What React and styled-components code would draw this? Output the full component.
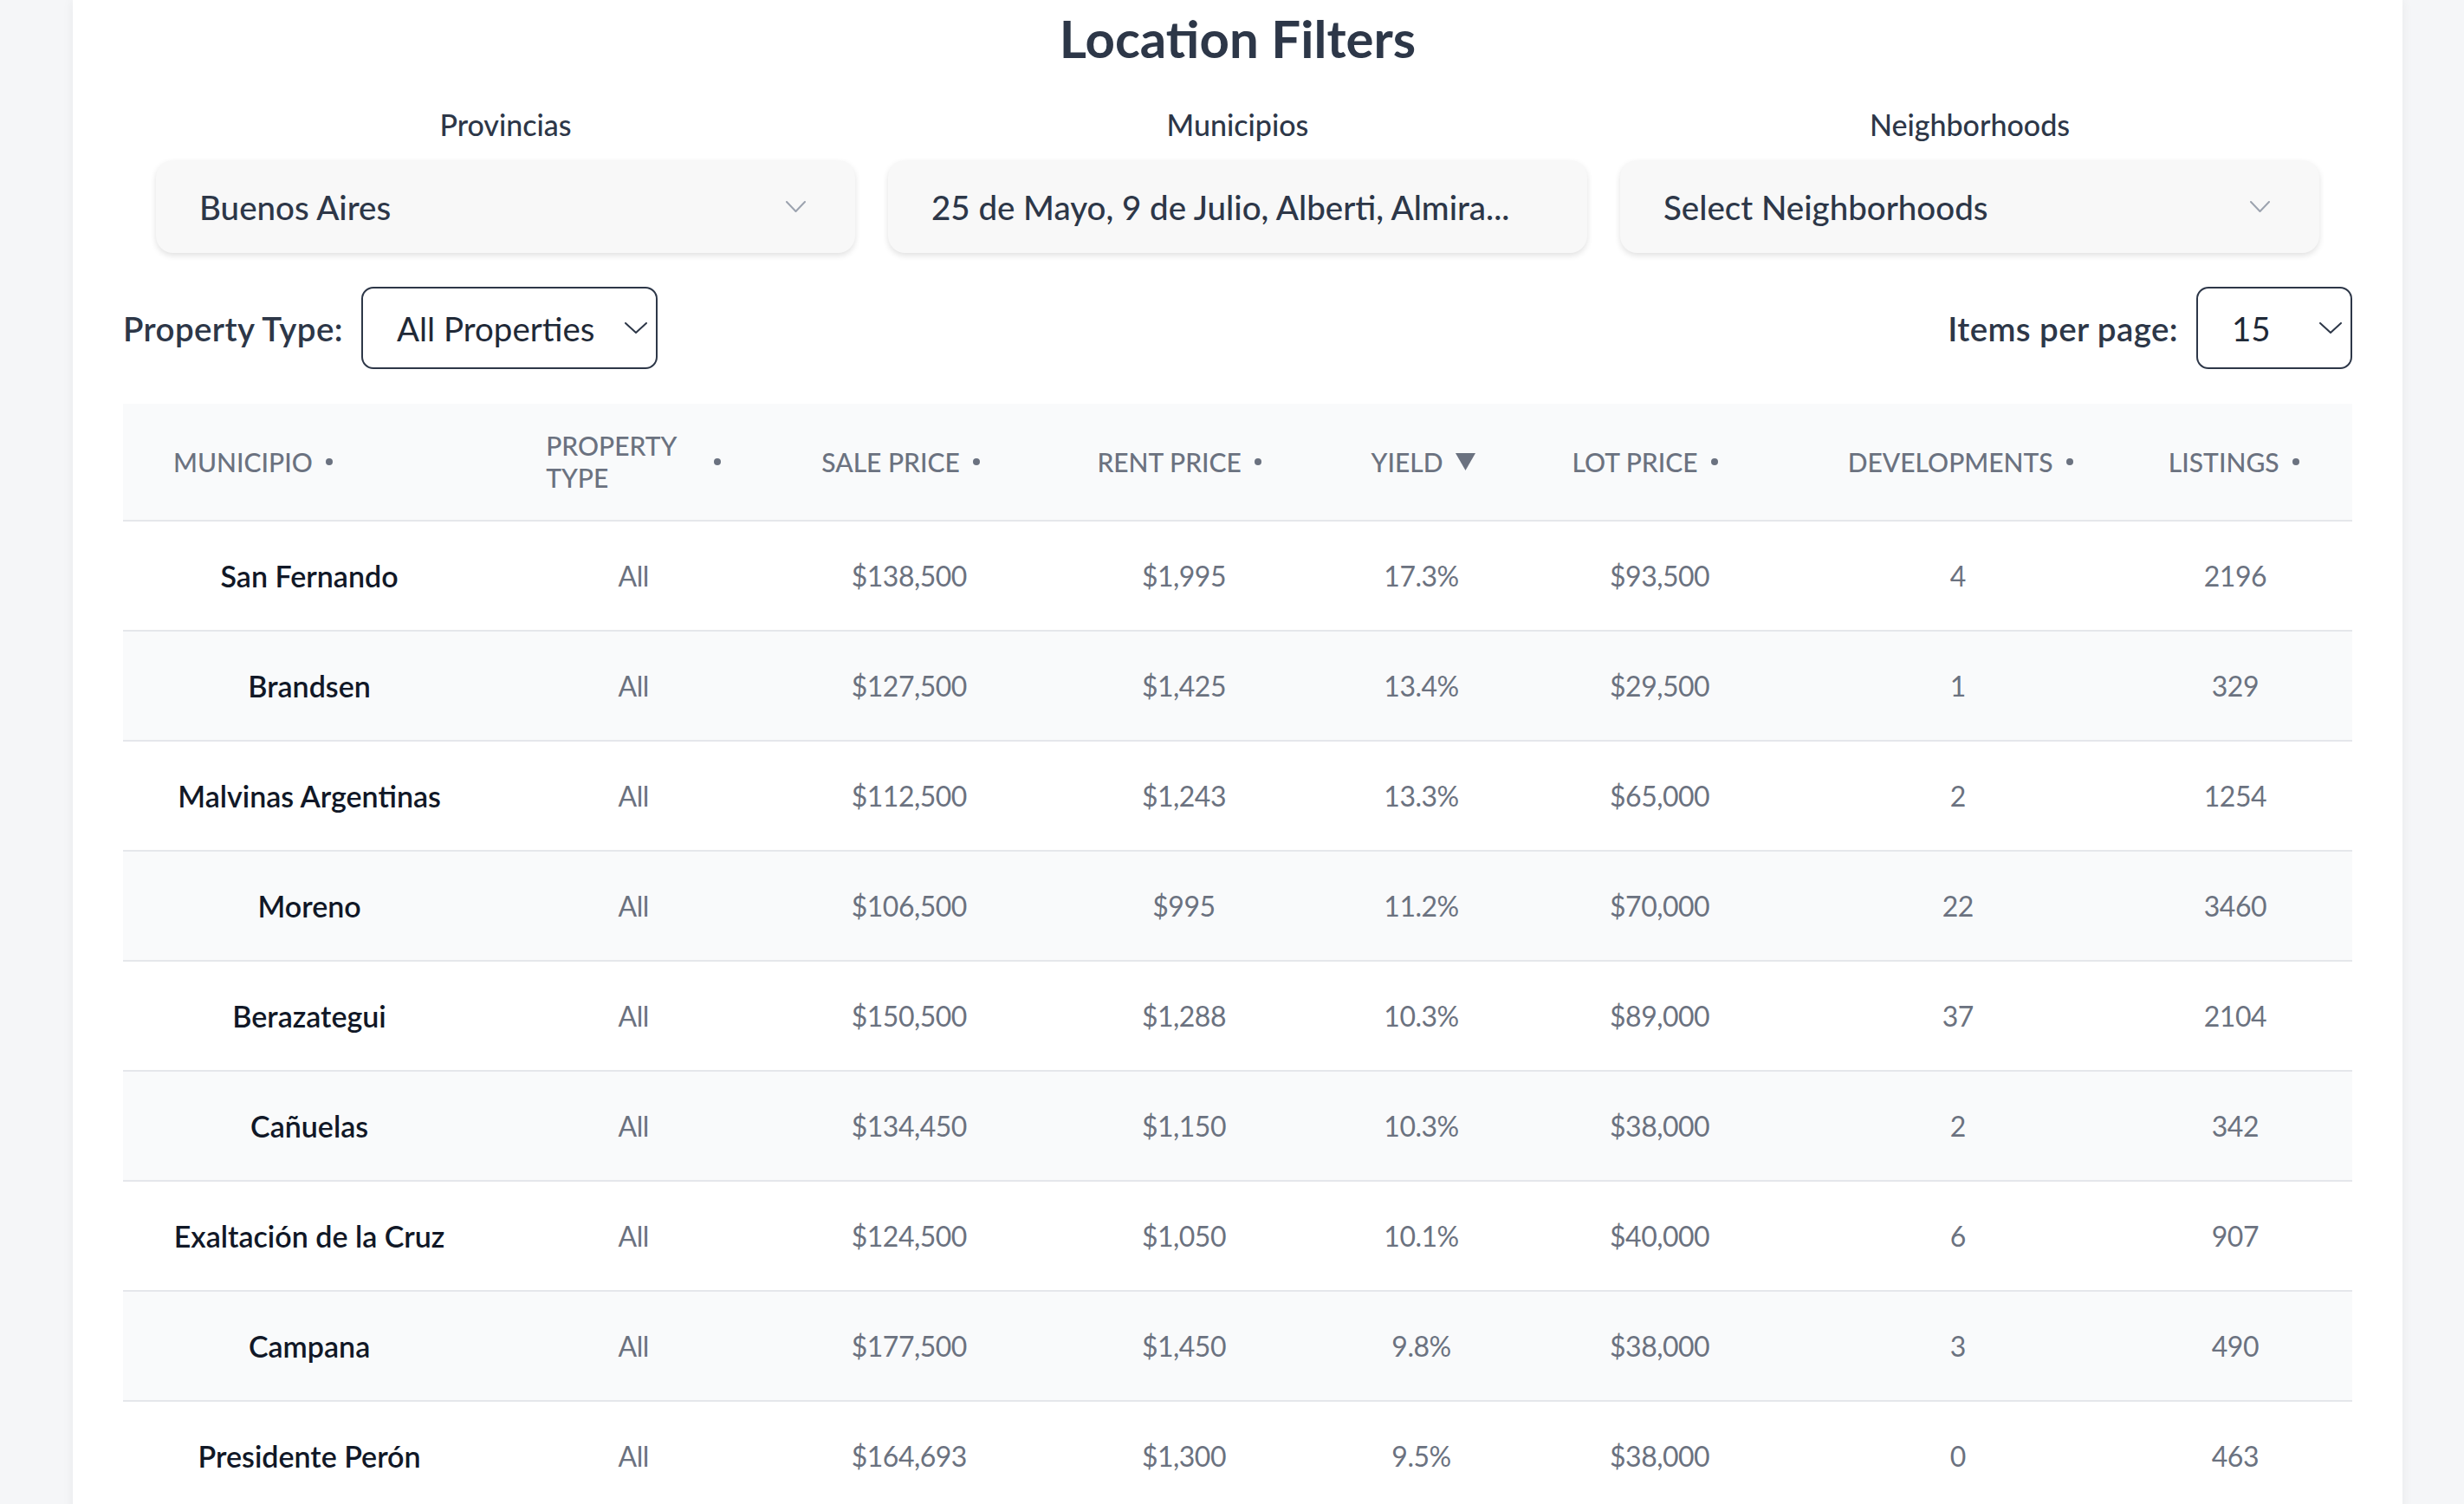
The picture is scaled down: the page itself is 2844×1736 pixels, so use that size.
import React from 'react';
import styled, { createGlobalStyle } from 'styled-components';

const GlobalStyle = createGlobalStyle`
  html, body {
    margin: 0;
    padding: 0;
    background: #f5f6f8;
  }
  body {
    font-family: Lato, "Open Sans", sans-serif;
    color: #2d3748;
  }
  * { box-sizing: border-box; }
`;

const rows = [
  ['San Fernando', 'All', '$138,500', '$1,995', '17.3%', '$93,500', '4', '2196'],
  ['Brandsen', 'All', '$127,500', '$1,425', '13.4%', '$29,500', '1', '329'],
  ['Malvinas Argentinas', 'All', '$112,500', '$1,243', '13.3%', '$65,000', '2', '1254'],
  ['Moreno', 'All', '$106,500', '$995', '11.2%', '$70,000', '22', '3460'],
  ['Berazategui', 'All', '$150,500', '$1,288', '10.3%', '$89,000', '37', '2104'],
  ['Cañuelas', 'All', '$134,450', '$1,150', '10.3%', '$38,000', '2', '342'],
  ['Exaltación de la Cruz', 'All', '$124,500', '$1,050', '10.1%', '$40,000', '6', '907'],
  ['Campana', 'All', '$177,500', '$1,450', '9.8%', '$38,000', '3', '490'],
  ['Presidente Perón', 'All', '$164,693', '$1,300', '9.5%', '$38,000', '0', '463'],
];

const columns = [
  { label: 'Municipio', width: 430 },
  { label: 'Property Type', width: 318, wrap: true },
  { label: 'Sale Price', width: 318 },
  { label: 'Rent Price', width: 316 },
  { label: 'Yield', width: 232, sorted: true },
  { label: 'Lot Price', width: 318 },
  { label: 'Developments', width: 370 },
  { label: 'Listings', width: 270 },
];

const filters = [
  { label: 'Provincias', value: 'Buenos Aires', chevron: true },
  { label: 'Municipios', value: '25 de Mayo, 9 de Julio, Alberti, Almira...', chevron: false },
  { label: 'Neighborhoods', value: 'Select Neighborhoods', chevron: true },
];

const Page = styled.div`
  padding: 0 71px 0 84px;
`;

const Card = styled.section`
  background: #fff;
  border-radius: 0 0 24px 24px;
  box-shadow: 0 0 14px rgba(15, 23, 42, 0.06);
  padding: 14px 58px 58px;
`;

const Title = styled.h2`
  margin: 0;
  text-align: center;
  font-size: 60px;
  line-height: 60px;
  font-weight: 700;
  color: #2d3748;
`;

const FilterGrid = styled.div`
  display: grid;
  grid-template-columns: repeat(3, 1fr);
  gap: 38px;
  padding: 0 38px;
  margin-top: 53px;
`;

const Field = styled.div`
  display: flex;
  flex-direction: column;
  min-width: 0;
`;

const FieldLabel = styled.div`
  text-align: center;
  font-size: 34px;
  line-height: 34px;
  font-weight: 500;
  color: #2d3748;
  margin-bottom: 24px;
`;

const Dropdown = styled.div`
  height: 107px;
  display: flex;
  align-items: center;
  gap: 20px;
  padding: 0 57px 0 50px;
  background: #f8f8f8;
  border-radius: 20px;
  box-shadow: 0 3px 7px rgba(0, 0, 0, 0.12);
  font-size: 38.5px;
  font-weight: 500;
  color: #2d3748;
`;

const DropdownText = styled.span`
  flex: 1;
  min-width: 0;
  white-space: nowrap;
  overflow: hidden;
  text-overflow: ellipsis;
`;

const Toolbar = styled.div`
  display: flex;
  align-items: center;
  justify-content: space-between;
  margin-top: 39px;
`;

const ToolGroup = styled.label`
  display: flex;
  align-items: center;
  gap: 21px;
  font-size: 38.5px;
  font-weight: 600;
  letter-spacing: 0.4px;
  color: #2d3748;
`;

const Select = styled.div`
  width: ${(p) => p.width}px;
  height: 95px;
  display: flex;
  align-items: center;
  justify-content: space-between;
  padding: 0 10px 0 39px;
  border: 2px solid #2d3748;
  border-radius: 14px;
  font-size: 38.5px;
  font-weight: 400;
  letter-spacing: 0;
  color: #1f2937;
`;

const Table = styled.table`
  width: 100%;
  margin-top: 40px;
  border-collapse: separate;
  border-spacing: 0;
  table-layout: fixed;
`;

const HeadCell = styled.th`
  height: 136px;
  padding: 0 58px;
  background: #f9fafb;
  border-bottom: 2px solid #e5e7eb;
  text-align: left;
  vertical-align: middle;
  font-size: 30px;
  line-height: 37px;
  font-weight: 500;
  text-transform: uppercase;
  color: #6b7280;
`;

const HeadInner = styled.div`
  display: flex;
  align-items: center;
  gap: 15px;
  white-space: ${(p) => (p.$wrap ? 'normal' : 'nowrap')};
`;

const SortDot = styled.span`
  flex: none;
  width: 8px;
  height: 8px;
  border-radius: 50%;
  background: #6b7280;
`;

const Row = styled.tr`
  background: ${(p) => (p.$striped ? '#f9fafb' : '#fff')};
`;

const Cell = styled.td`
  height: 127px;
  padding: 0 10px;
  border-bottom: 2px solid #e5e7eb;
  text-align: center;
  vertical-align: middle;
  font-size: 32px;
  letter-spacing: -0.5px;
  font-weight: 400;
  color: #6b7280;
`;

const NameCell = styled(Cell)`
  font-size: 34px;
  letter-spacing: 0;
  font-weight: 600;
  color: #111827;
`;

const Chevron = ({ w = 23, h = 13, color = '#9ca3af' }) => (
  <svg width={w} height={h} viewBox={`0 0 ${w} ${h}`} fill="none" style={{ flex: 'none' }}>
    <polyline
      points={`1,1 ${w / 2},${h - 1} ${w - 1},1`}
      stroke={color}
      strokeWidth="2"
      strokeLinecap="round"
      strokeLinejoin="round"
    />
  </svg>
);

const SortArrow = () => (
  <svg width="23" height="20" viewBox="0 0 23 20" style={{ flex: 'none' }}>
    <polygon points="0,0 23,0 11.5,20" fill="#6b7280" />
  </svg>
);

export default function App() {
  return (
    <Page>
      <GlobalStyle />
      <Card>
        <Title>Location Filters</Title>

        <FilterGrid>
          {filters.map((f) => (
            <Field key={f.label}>
              <FieldLabel>{f.label}</FieldLabel>
              <Dropdown>
                <DropdownText>{f.value}</DropdownText>
                {f.chevron && <Chevron />}
              </Dropdown>
            </Field>
          ))}
        </FilterGrid>

        <Toolbar>
          <ToolGroup>
            Property Type:
            <Select width={342}>
              <span>All Properties</span>
              <Chevron w={26} h={13} color="#2d3748" />
            </Select>
          </ToolGroup>
          <ToolGroup>
            Items per page:
            <Select width={180}>
              <span>15</span>
              <Chevron w={26} h={13} color="#2d3748" />
            </Select>
          </ToolGroup>
        </Toolbar>

        <Table>
          <colgroup>
            {columns.map((c) => (
              <col key={c.label} style={{ width: c.width }} />
            ))}
          </colgroup>
          <thead>
            <tr>
              {columns.map((c) => (
                <HeadCell key={c.label}>
                  <HeadInner $wrap={c.wrap}>
                    <span>{c.label}</span>
                    {c.sorted ? <SortArrow /> : <SortDot />}
                  </HeadInner>
                </HeadCell>
              ))}
            </tr>
          </thead>
          <tbody>
            {rows.map((r, i) => (
              <Row key={r[0]} $striped={i % 2 === 1}>
                <NameCell>{r[0]}</NameCell>
                {r.slice(1).map((v, j) => (
                  <Cell key={j}>{v}</Cell>
                ))}
              </Row>
            ))}
          </tbody>
        </Table>
      </Card>
    </Page>
  );
}
